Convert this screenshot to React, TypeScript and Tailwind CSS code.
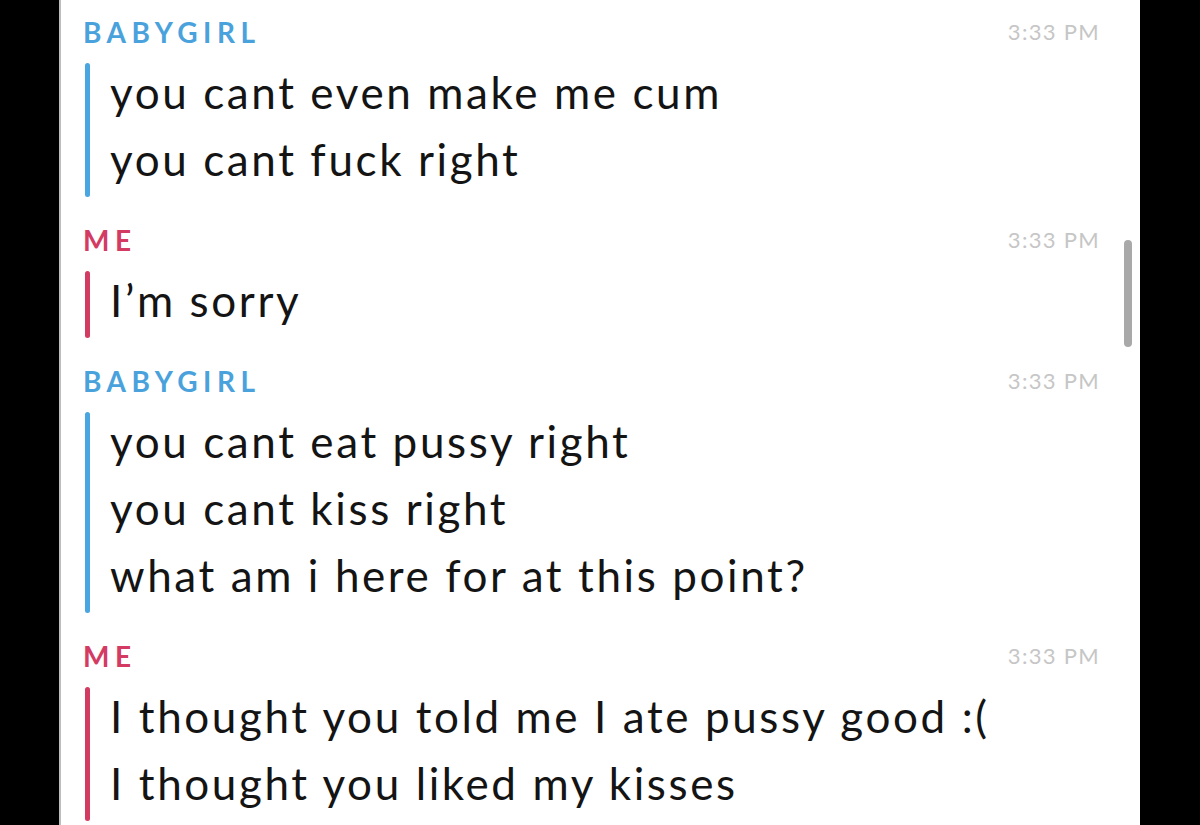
import React from "react";

type Msg = { who: "BABYGIRL" | "ME"; lines: string[] };

const msgs: Msg[] = [
  { who: "BABYGIRL", lines: ["you cant even make me cum", "you cant fuck right"] },
  { who: "ME", lines: ["I\u2019m sorry"] },
  {
    who: "BABYGIRL",
    lines: ["you cant eat pussy right", "you cant kiss right", "what am i here for at this point?"],
  },
  { who: "ME", lines: ["I thought you told me I ate pussy good :(", "I thought you liked my kisses"] },
];

function Block({ m, first }: { m: Msg; first: boolean }) {
  const blue = m.who === "BABYGIRL";
  return (
    <div className={first ? "pt-[18px]" : "pt-[33px]"}>
      <div className="flex items-center justify-between pr-[40px]">
        <div
          className={`text-[28px] leading-[28px] font-bold tracking-[5.5px] ${
            blue ? "text-[#4aa2dc]" : "text-[#d33b63]"
          }`}
        >
          {m.who}
        </div>
        <div className="text-[22px] leading-[28px] text-[#c6c6c6] tracking-[1.3px]">3:33 PM</div>
      </div>
      <div className="flex mt-[13px] ml-[2px]">
        <div
          className={`w-[5px] mt-[4px] mb-[-4px] rounded-full ${blue ? "bg-[#4aa6e0]" : "bg-[#d33b63]"}`}
        />
        <div className="pl-[20px] text-[44px] leading-[67px] tracking-[2.6px] text-[#141414]">
          {m.lines.map((l, i) => (
            <div key={i} className="whitespace-nowrap">
              {l}
            </div>
          ))}
        </div>
      </div>
    </div>
  );
}

export default function App() {
  return (
    <div
      className="w-[1200px] h-[825px] bg-black flex overflow-hidden"
      style={{ fontFamily: "Lato, 'Noto Sans', sans-serif" }}
    >
      <div className="w-[59px] shrink-0" />
      <div className="w-[2px] bg-[#bdbdbd] shrink-0" />
      <div className="relative flex-1 bg-white pl-[22px] overflow-hidden">
        {msgs.map((m, i) => (
          <Block key={i} m={m} first={i === 0} />
        ))}
        <div className="absolute left-[1063px] top-[240px] w-[8px] h-[107px] rounded-full bg-[#a9a9a9]" />
      </div>
      <div className="w-[60px] shrink-0" />
    </div>
  );
}
